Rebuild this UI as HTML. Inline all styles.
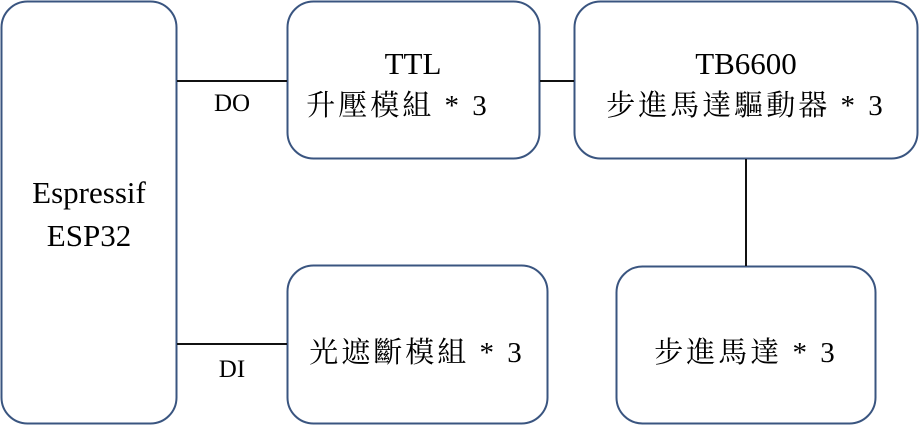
<!DOCTYPE html>
<html><head><meta charset="utf-8"><style>
html,body{margin:0;padding:0;background:#fff;}
svg{display:block;}
text{font-family:"Liberation Serif","Noto Serif CJK SC","Noto Sans CJK TC",serif;fill:#000;}
.l{font-size:31px;}
.c{font-size:29px;letter-spacing:3px;}
.s{font-size:25px;}
</style></head><body>
<svg width="920" height="426" viewBox="0 0 920 426" xmlns="http://www.w3.org/2000/svg">
<g fill="#fff" stroke="#3a5580" stroke-width="2">
<rect x="1.5" y="1.5" width="175" height="422" rx="26"/>
<rect x="287.5" y="1.5" width="252" height="157" rx="26"/>
<rect x="574.5" y="1.5" width="343" height="157" rx="26"/>
<rect x="287.5" y="265.5" width="260" height="158" rx="26"/>
<rect x="616.5" y="266.5" width="259" height="157" rx="26"/>
</g>
<g stroke="#111" stroke-width="2">
<line x1="177" y1="81" x2="287" y2="81"/>
<line x1="540" y1="81" x2="574" y2="81"/>
<line x1="177" y1="344" x2="287" y2="344"/>
<line x1="746" y1="159" x2="746" y2="266"/>
</g>
<g text-anchor="middle">
<text class="l" x="89" y="203">Espressif</text>
<text class="l" x="89" y="246">ESP32</text>
<text class="l" x="413" y="74">TTL</text>
<text class="c" x="398" y="115">升壓模組 * 3</text>
<text class="l" x="746" y="74">TB6600</text>
<text class="c" x="746" y="115">步進馬達驅動器 * 3</text>
<text class="c" x="417" y="362">光遮斷模組 * 3</text>
<text class="c" x="746" y="362">步進馬達 * 3</text>
<text class="s" x="232" y="111">DO</text>
<text class="s" x="232" y="377">DI</text>
</g>
</svg>
</body></html>
